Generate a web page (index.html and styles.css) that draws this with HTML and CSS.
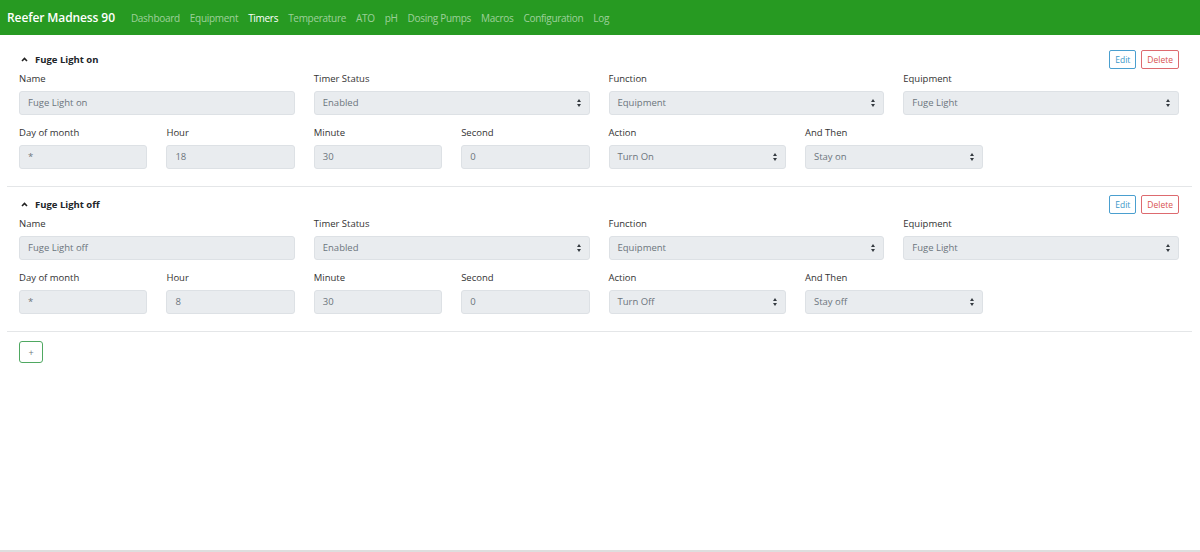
FILE: index.html
```html
<!DOCTYPE html>
<html>
<head>
    <title>Reefer Madness 90 - Timers</title>
    <link rel="stylesheet" href="styles.css">
</head>
<body>
<div class="page">
    <nav class="navbar">
        <span class="brand">Reefer Madness 90</span>
        <a href="#">Dashboard</a>
        <a href="#">Equipment</a>
        <a href="#" class="active">Timers</a>
        <a href="#">Temperature</a>
        <a href="#">ATO</a>
        <a href="#">pH</a>
        <a href="#">Dosing Pumps</a>
        <a href="#">Macros</a>
        <a href="#">Configuration</a>
        <a href="#">Log</a>
    </nav>

    <main class="content">
        <section class="timer">
            <div class="timer-head">
                <div class="timer-title">
                    <svg class="chevron" width="7" height="5" viewBox="0 0 7 5"><path d="M1 4 L3.5 1.5 L6 4" fill="none" stroke="#222" stroke-width="1.6"/></svg>
                    Fuge Light on
                </div>
                <div class="actions">
                    <button class="btn btn-edit">Edit</button>
                    <button class="btn btn-delete">Delete</button>
                </div>
            </div>
            <div class="grid">
                <div class="field span6"><label>Name</label><div class="input">Fuge Light on</div></div>
                <div class="field span6"><label>Timer Status</label><div class="input select">Enabled</div></div>
                <div class="field span6"><label>Function</label><div class="input select">Equipment</div></div>
                <div class="field span6"><label>Equipment</label><div class="input select">Fuge Light</div></div>
            </div>
            <div class="grid">
                <div class="field span3"><label>Day of month</label><div class="input">*</div></div>
                <div class="field span3"><label>Hour</label><div class="input">18</div></div>
                <div class="field span3"><label>Minute</label><div class="input">30</div></div>
                <div class="field span3"><label>Second</label><div class="input">0</div></div>
                <div class="field span4"><label>Action</label><div class="input select">Turn On</div></div>
                <div class="field span4"><label>And Then</label><div class="input select">Stay on</div></div>
            </div>
        </section>

        <section class="timer">
            <div class="timer-head">
                <div class="timer-title">
                    <svg class="chevron" width="7" height="5" viewBox="0 0 7 5"><path d="M1 4 L3.5 1.5 L6 4" fill="none" stroke="#222" stroke-width="1.6"/></svg>
                    Fuge Light off
                </div>
                <div class="actions">
                    <button class="btn btn-edit">Edit</button>
                    <button class="btn btn-delete">Delete</button>
                </div>
            </div>
            <div class="grid">
                <div class="field span6"><label>Name</label><div class="input">Fuge Light off</div></div>
                <div class="field span6"><label>Timer Status</label><div class="input select">Enabled</div></div>
                <div class="field span6"><label>Function</label><div class="input select">Equipment</div></div>
                <div class="field span6"><label>Equipment</label><div class="input select">Fuge Light</div></div>
            </div>
            <div class="grid">
                <div class="field span3"><label>Day of month</label><div class="input">*</div></div>
                <div class="field span3"><label>Hour</label><div class="input">8</div></div>
                <div class="field span3"><label>Minute</label><div class="input">30</div></div>
                <div class="field span3"><label>Second</label><div class="input">0</div></div>
                <div class="field span4"><label>Action</label><div class="input select">Turn Off</div></div>
                <div class="field span4"><label>And Then</label><div class="input select">Stay off</div></div>
            </div>
        </section>

        <div class="add-row">
            <button class="btn btn-add">+</button>
        </div>
    </main>

    <footer class="footer"></footer>
</div>
</body>
</html>
```

FILE: styles.css
```css
html, body {
    margin: 0;
    padding: 0;
    height: 100%;
}
body {
    font-family: "Open Sans", "Noto Sans", sans-serif;
    color: #212529;
    background-color: #fff;
}
.page {
    display: flex;
    flex-direction: column;
    min-height: 100vh;
}

/* barra verde do topo */
.navbar {
    display: flex;
    align-items: center;
    height: 35px;
    padding: 0 7px;
    background-color: #279a22;
}
.brand {
    color: #fff;
    font-weight: 600;
    font-size: 12px;
    margin-right: 16px;
    letter-spacing: -0.1px;
}
.navbar a {
    color: rgba(255, 255, 255, 0.55);
    text-decoration: none;
    font-size: 10px;
    margin-right: 10px;
    letter-spacing: -0.3px;
}
.navbar a.active {
    color: #fff;
}

.content {
    flex: 1;
    padding: 7px 8px 0 7px;
}

.timer {
    border-bottom: 1px solid #e4e6e8;
    padding: 8px 13px 17px 12px;
}
.timer-head {
    display: flex;
    justify-content: space-between;
    align-items: center;
    height: 19px;
    margin-bottom: 4px;
}
.timer-title {
    display: flex;
    align-items: center;
    font-size: 9.5px;
    font-weight: 700;
}
.chevron {
    margin: 0 7px 0 2px;
}
.actions {
    display: flex;
    gap: 5px;
}

.btn {
    font-family: inherit;
    background: #fff;
    border-radius: 2px;
    border: 1px solid;
    font-size: 8.5px;
    padding: 0 5px;
    height: 19px;
    cursor: pointer;
}
.btn-edit {
    color: #3b97c9;
    border-color: #4a9fcf;
}
.btn-delete {
    color: #d9534f;
    border-color: #dd6a6f;
}
.btn-add {
    color: #6c757d;
    border-color: #4fa861;
    width: 24px;
    height: 22px;
    font-size: 9px;
    padding: 0;
    border-radius: 3px;
}

.grid {
    display: grid;
    grid-template-columns: repeat(24, 1fr);
    column-gap: 19px;
}
.span6 { grid-column: span 6; }
.span4 { grid-column: span 4; }
.span3 { grid-column: span 3; }

.field label {
    display: block;
    font-size: 9.5px;
    color: #333;
    margin: 0 0 6px;
    line-height: 12px;
}
.grid + .grid {
    margin-top: 12px;
}
.input {
    height: 24px;
    line-height: 22px;
    box-sizing: border-box;
    background-color: #e9ecef;
    border: 1px solid #dde1e5;
    border-radius: 3px;
    padding: 0 8px;
    font-size: 9.5px;
    color: #6c757d;
    position: relative;
}
.select::after {
    content: "";
    position: absolute;
    right: 8px;
    top: 7px;
    border-left: 2.5px solid transparent;
    border-right: 2.5px solid transparent;
    border-bottom: 3px solid #343a40;
}
.select::before {
    content: "";
    position: absolute;
    right: 8px;
    top: 12px;
    border-left: 2.5px solid transparent;
    border-right: 2.5px solid transparent;
    border-top: 3px solid #343a40;
}

.add-row {
    display: flex;
    padding: 9px 12px;
}

.footer {
    height: 2px;
    background-color: #dedede;
}
```
